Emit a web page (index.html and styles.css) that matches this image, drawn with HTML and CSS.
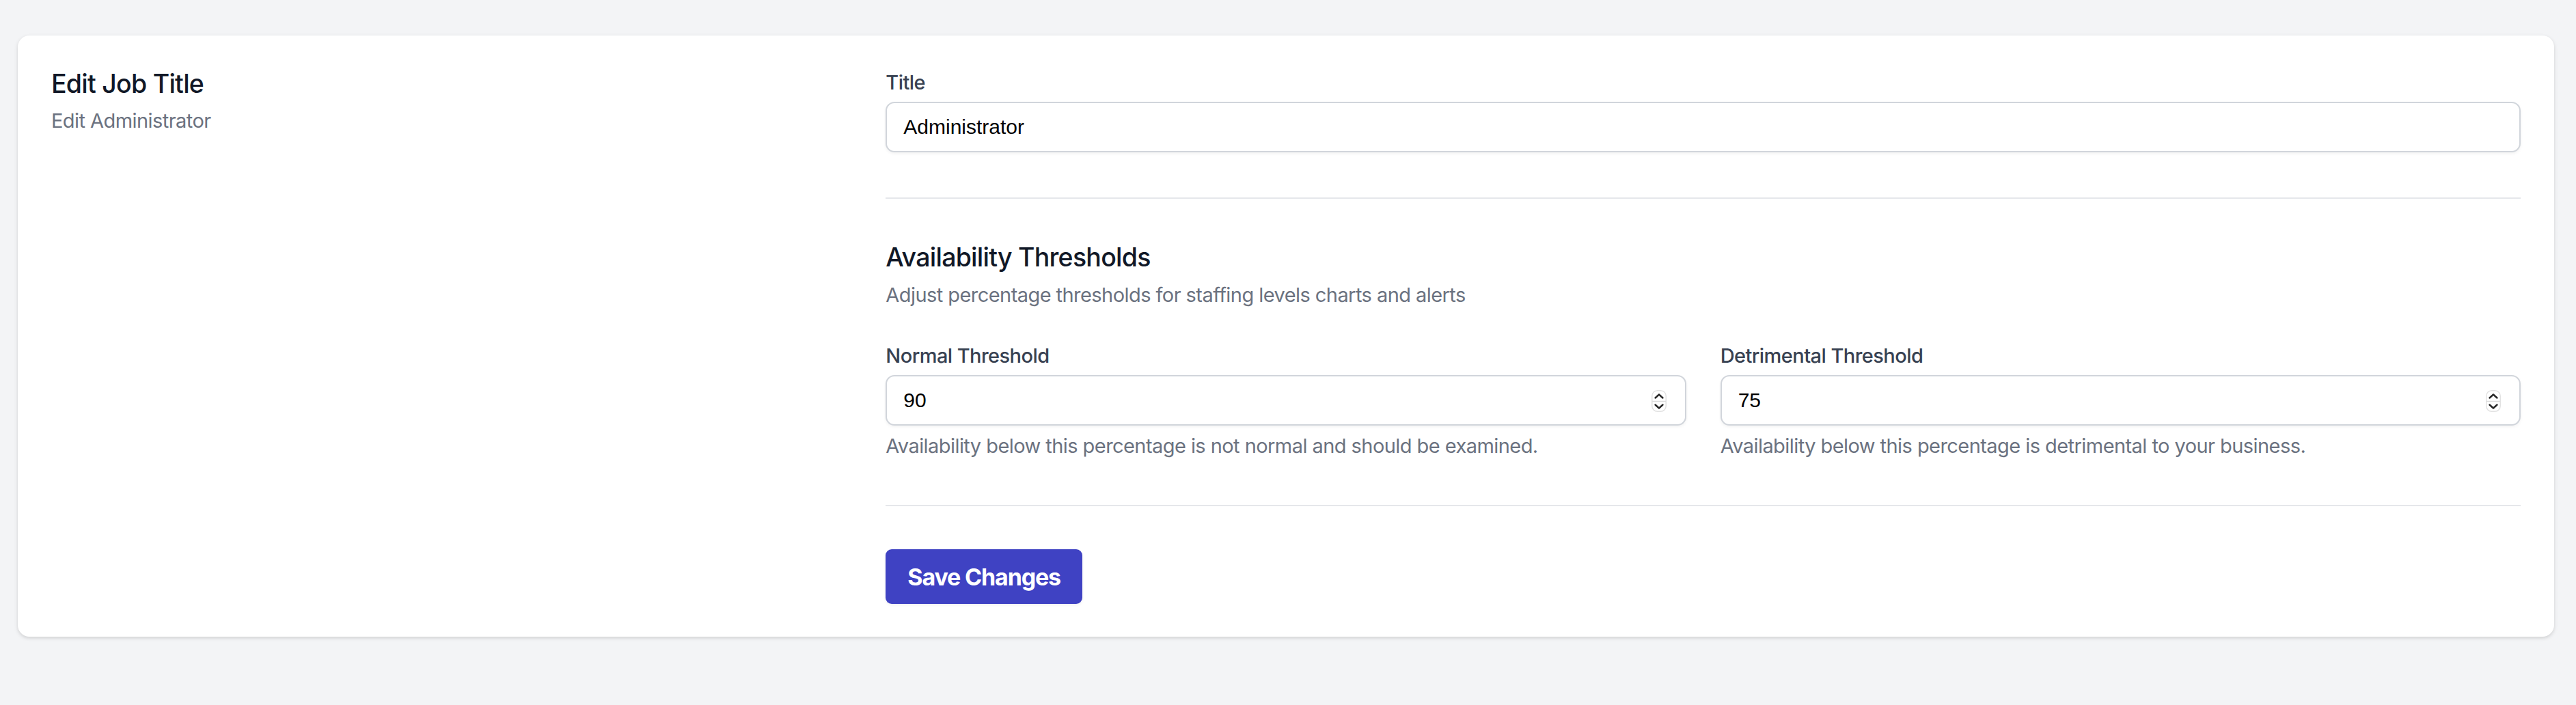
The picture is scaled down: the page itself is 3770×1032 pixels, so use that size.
FILE: index.html
```html
<!DOCTYPE html>
<html lang="en">
<head>
<meta charset="utf-8">
<title>Edit Job Title</title>
<link rel="stylesheet" href="styles.css">
</head>
<body>
<main class="page">
  <form class="card" onsubmit="return false">
    <div class="intro">
      <h2 class="intro-title">Edit Job Title</h2>
      <p class="intro-sub">Edit Administrator</p>
    </div>

    <div class="main">
      <label class="label" for="title">Title</label>
      <input class="input" id="title" type="text" value="Administrator">

      <hr class="divider divider-top">

      <h3 class="section-title">Availability Thresholds</h3>
      <p class="section-sub">Adjust percentage thresholds for staffing levels charts and alerts</p>

      <div class="thresholds">
        <div class="threshold">
          <label class="label" for="normal">Normal Threshold</label>
          <div class="field">
            <input class="field-input" id="normal" type="number" value="90">
            <span class="spinner" aria-hidden="true">
              <svg width="22" height="32" viewBox="0 0 22 32">
                <rect x="0.75" y="0.75" width="20.5" height="30.5" rx="8" fill="#fff" stroke="#e2e2e2" stroke-width="1.5"/>
                <line x1="1" y1="16.5" x2="21" y2="16.5" stroke="#dcdcdc" stroke-width="1.5"/>
                <polyline points="5.5,11.5 11,6.5 16.5,11.5" fill="none" stroke="#262626" stroke-width="2.4" stroke-linecap="round" stroke-linejoin="round"/>
                <polyline points="5.5,21.5 11,26.5 16.5,21.5" fill="none" stroke="#262626" stroke-width="2.4" stroke-linecap="round" stroke-linejoin="round"/>
              </svg>
            </span>
          </div>
          <p class="help">Availability below this percentage is not normal and should be examined.</p>
        </div>
        <div class="threshold">
          <label class="label" for="detrimental">Detrimental Threshold</label>
          <div class="field">
            <input class="field-input" id="detrimental" type="number" value="75">
            <span class="spinner" aria-hidden="true">
              <svg width="22" height="32" viewBox="0 0 22 32">
                <rect x="0.75" y="0.75" width="20.5" height="30.5" rx="8" fill="#fff" stroke="#e2e2e2" stroke-width="1.5"/>
                <line x1="1" y1="16.5" x2="21" y2="16.5" stroke="#dcdcdc" stroke-width="1.5"/>
                <polyline points="5.5,11.5 11,6.5 16.5,11.5" fill="none" stroke="#262626" stroke-width="2.4" stroke-linecap="round" stroke-linejoin="round"/>
                <polyline points="5.5,21.5 11,26.5 16.5,21.5" fill="none" stroke="#262626" stroke-width="2.4" stroke-linecap="round" stroke-linejoin="round"/>
              </svg>
            </span>
          </div>
          <p class="help">Availability below this percentage is detrimental to your business.</p>
        </div>
      </div>

      <hr class="divider divider-bottom">

      <button class="btn" type="submit">Save Changes</button>
    </div>
  </form>
</main>
</body>
</html>
```

FILE: styles.css
```css
* {
  box-sizing: border-box;
}

html,
body {
  margin: 0;
  padding: 0;
}

body {
  min-height: 100vh;
  background: #f3f4f6;
  font-family: Inter, "Noto Sans", "Liberation Sans", sans-serif;
  letter-spacing: -0.035em;
  color: #111827;
}

.page {
  padding: 52px 32px 0 26px;
}

/* Card: one narrow intro column, two columns of form */
.card {
  display: grid;
  grid-template-columns: repeat(3, minmax(0, 1fr));
  column-gap: 50px;
  padding: 47px 49px 48px;
  background: #ffffff;
  border-radius: 17px;
  box-shadow: 0 2px 6px rgba(0, 0, 0, 0.1), 0 2px 4px rgba(0, 0, 0, 0.06);
}

.intro-title {
  margin: 0;
  font-size: 37.5px;
  line-height: 47px;
  font-weight: 500;
  letter-spacing: -0.02em;
  color: #111827;
}

.intro-sub {
  margin: 9px 0 0;
  font-size: 29px;
  line-height: 43px;
  color: #6b7280;
}

.main {
  grid-column: span 2;
  display: flex;
  flex-direction: column;
  align-items: stretch;
}

.label {
  display: block;
  font-size: 29px;
  line-height: 43px;
  font-weight: 500;
  color: #374151;
}

.input,
.field {
  margin-top: 7px;
  height: 74px;
  width: 100%;
  border: 2px solid #d1d5db;
  border-radius: 13px;
  background: #ffffff;
  box-shadow: 0 2px 4px rgba(0, 0, 0, 0.05);
}

.input {
  display: block;
  padding: 0 24px;
  font-family: "Liberation Sans", Arial, sans-serif;
  font-size: 30px;
  letter-spacing: 0;
  color: #000000;
  outline: none;
}

.divider {
  width: 100%;
  height: 2px;
  margin: 0;
  border: 0;
  background: #e5e7eb;
}

.divider-top {
  margin-top: 66px;
}

.section-title {
  margin: 62px 0 0;
  font-size: 37.5px;
  line-height: 47px;
  font-weight: 500;
  letter-spacing: -0.02em;
  color: #111827;
}

.section-sub {
  margin: 10px 0 0;
  font-size: 29px;
  line-height: 43px;
  color: #6b7280;
}

.thresholds {
  display: grid;
  grid-template-columns: repeat(2, minmax(0, 1fr));
  column-gap: 50px;
  margin-top: 46px;
}

.field {
  display: flex;
  align-items: center;
  padding: 0 27px 0 0;
}

.field-input {
  flex: 1;
  min-width: 0;
  height: 100%;
  padding: 0 0 0 24px;
  border: 0;
  background: transparent;
  font-family: "Liberation Sans", Arial, sans-serif;
  font-size: 30px;
  letter-spacing: 0;
  color: #000000;
  outline: none;
  -moz-appearance: textfield;
}

.field-input::-webkit-inner-spin-button,
.field-input::-webkit-outer-spin-button {
  -webkit-appearance: none;
  margin: 0;
}

.spinner {
  display: flex;
  width: 22px;
  height: 32px;
  margin-top: 2px;
}

.help {
  margin: 8px 0 0;
  font-size: 29px;
  line-height: 43px;
  color: #6b7280;
}

.divider-bottom {
  margin-top: 65px;
}

.btn {
  align-self: flex-start;
  margin-top: 63px;
  height: 80px;
  padding: 0 32px;
  border: 0;
  border-radius: 9px;
  background: #3f42c3;
  color: #ffffff;
  font-family: Inter, "Noto Sans", "Liberation Sans", sans-serif;
  font-size: 34px;
  font-weight: 700;
  letter-spacing: -0.034em;
  cursor: pointer;
  box-shadow: 0 2px 4px rgba(0, 0, 0, 0.05);
}
```
